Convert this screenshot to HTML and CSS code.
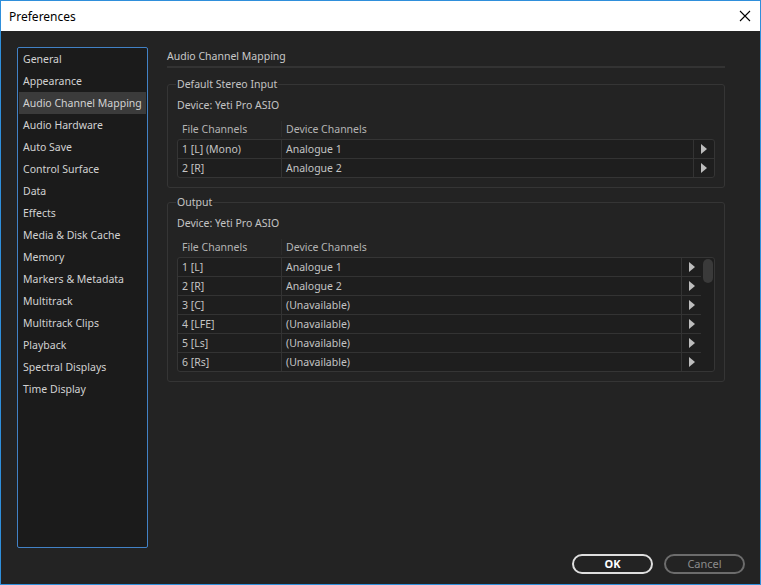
FILE: index.html
```html
<!DOCTYPE html>
<html>
<head>
<meta charset="utf-8">
<title>Preferences</title>
<link rel="stylesheet" href="styles.css">
</head>
<body>
<div class="window">
  <div class="titlebar">
    <span class="title">Preferences</span>
    <svg class="close" width="12" height="12" viewBox="0 0 12 12"><path d="M1 1L11 11M11 1L1 11" stroke="#000" stroke-width="1.1" fill="none"/></svg>
  </div>
  <div class="main">
    <div class="panes">
      <ul class="sidebar">
        <li>General</li>
        <li>Appearance</li>
        <li class="selected">Audio Channel Mapping</li>
        <li>Audio Hardware</li>
        <li>Auto Save</li>
        <li>Control Surface</li>
        <li>Data</li>
        <li>Effects</li>
        <li>Media &amp; Disk Cache</li>
        <li>Memory</li>
        <li>Markers &amp; Metadata</li>
        <li>Multitrack</li>
        <li>Multitrack Clips</li>
        <li>Playback</li>
        <li>Spectral Displays</li>
        <li>Time Display</li>
      </ul>
      <div class="content">
        <div class="heading">Audio Channel Mapping</div>
        <fieldset class="group first">
          <legend>Default Stereo Input</legend>
          <div class="device">Device: Yeti Pro ASIO</div>
          <div class="thead"><span class="c1">File Channels</span><span class="c2">Device Channels</span></div>
          <div class="table">
            <div class="rows">
              <div class="row"><span class="c1">1 [L] (Mono)</span><span class="c2">Analogue 1</span><span class="c3"><i class="arrow"></i></span></div>
              <div class="row"><span class="c1">2 [R]</span><span class="c2">Analogue 2</span><span class="c3"><i class="arrow"></i></span></div>
            </div>
          </div>
        </fieldset>
        <fieldset class="group second">
          <legend>Output</legend>
          <div class="device">Device: Yeti Pro ASIO</div>
          <div class="thead"><span class="c1">File Channels</span><span class="c2">Device Channels</span></div>
          <div class="table">
            <div class="rows">
              <div class="row"><span class="c1">1 [L]</span><span class="c2">Analogue 1</span><span class="c3"><i class="arrow"></i></span></div>
              <div class="row"><span class="c1">2 [R]</span><span class="c2">Analogue 2</span><span class="c3"><i class="arrow"></i></span></div>
              <div class="row"><span class="c1">3 [C]</span><span class="c2">(Unavailable)</span><span class="c3"><i class="arrow"></i></span></div>
              <div class="row"><span class="c1">4 [LFE]</span><span class="c2">(Unavailable)</span><span class="c3"><i class="arrow"></i></span></div>
              <div class="row"><span class="c1">5 [Ls]</span><span class="c2">(Unavailable)</span><span class="c3"><i class="arrow"></i></span></div>
              <div class="row"><span class="c1">6 [Rs]</span><span class="c2">(Unavailable)</span><span class="c3"><i class="arrow"></i></span></div>
            </div>
            <div class="scrollbar"><div class="thumb"></div></div>
          </div>
        </fieldset>
      </div>
    </div>
    <div class="footer">
      <button class="btn ok">OK</button>
      <button class="btn cancel">Cancel</button>
    </div>
  </div>
</div>
</body>
</html>
```
FILE: styles.css
```css
* { box-sizing: border-box; }
html, body { margin: 0; padding: 0; }
body {
  width: 761px;
  height: 585px;
  overflow: hidden;
  font-family: "Noto Sans", "Open Sans", sans-serif;
  font-size: 10.5px;
}
.window {
  width: 761px;
  height: 585px;
  border: 1px solid #2f8fdb;
  display: flex;
  flex-direction: column;
  background: #232323;
}
.titlebar {
  height: 30px;
  background: #ffffff;
  display: flex;
  align-items: center;
  justify-content: space-between;
  padding: 0 9px 0 8px;
}
.title {
  font-size: 12px;
  color: #000;
}
.close { display: block; }
.main {
  flex: 1;
  display: flex;
  flex-direction: column;
  padding: 16px 15px 10px 16px;
}
.panes {
  display: flex;
  gap: 19px;
  height: 501px;
}
.sidebar {
  list-style: none;
  margin: 0;
  padding: 0 1px;
  width: 131px;
  height: 501px;
  background: #1b1b1b;
  border: 1px solid #4282c6;
  border-radius: 2px;
}
.sidebar li {
  height: 22px;
  line-height: 22px;
  padding-left: 4px;
  color: #d2d2d2;
  white-space: nowrap;
}
.sidebar li.selected {
  background: #3b3b3b;
}
.content {
  width: 558px;
  display: flex;
  flex-direction: column;
}
.heading {
  height: 21px;
  line-height: 18px;
  color: #c8c8c8;
  border-bottom: 2px solid #333333;
}
.group {
  margin: 0;
  padding: 0 9px 9px 9px;
  border: 1px solid #353535;
  border-radius: 3px;
}
.group.first { margin-top: 8px; }
.group.second { margin-top: 6px; }
.group legend {
  padding: 0 1px;
  margin-left: -1px;
  line-height: 16px;
  color: #c4c4c4;
}
.device {
  margin-top: 5px;
  line-height: 16px;
  color: #c4c4c4;
}
.thead {
  margin-top: 6px;
  height: 20px;
  display: flex;
  align-items: center;
  color: #b4b4b4;
}
.thead .c1 {
  width: 105px;
  padding-left: 5px;
  border-right: 1px solid #2c2c2c;
  line-height: 16px;
}
.thead .c2 {
  padding-left: 4px;
}
.table {
  display: flex;
  background: #1e1e1e;
  border: 1px solid #353535;
  border-radius: 3px;
}
.rows {
  flex: 1;
  display: flex;
  flex-direction: column;
}
.row {
  display: grid;
  grid-template-columns: 104px 1fr 21px;
  height: 19px;
  border-bottom: 1px solid #333333;
  color: #c4c4c4;
}
.row:last-child { border-bottom: none; height: 18px; }
.row span {
  display: flex;
  align-items: center;
  padding-bottom: 1px;
}
.row .c1 {
  padding-left: 4px;
  border-right: 1px solid #333333;
}
.row .c2 {
  padding-left: 4px;
}
.row .c3 {
  justify-content: center;
  border-left: 1px solid #333333;
  padding-bottom: 0;
}
.second .row { grid-template-columns: 104px 1fr 20px; }
.arrow {
  display: block;
  width: 0;
  height: 0;
  border-left: 6px solid #bdbdbd;
  border-top: 5px solid transparent;
  border-bottom: 5px solid transparent;
}
.scrollbar {
  width: 13px;
  padding: 1px 1px 0 2px;
}
.thumb {
  width: 10px;
  height: 24px;
  border-radius: 5px;
  background: #3a3a3a;
}
.footer {
  margin-top: 6px;
  display: flex;
  justify-content: flex-end;
  gap: 11px;
}
.btn {
  width: 81px;
  height: 20px;
  border-radius: 10px;
  background: transparent;
  font-family: "Noto Sans", "Open Sans", sans-serif;
  font-size: 11px;
  padding: 0;
  line-height: 16px;
}
.btn.ok {
  border: 2px solid #dedede;
  color: #ffffff;
  font-weight: bold;
}
.btn.cancel {
  border: 2px solid #6c6c6c;
  color: #8c8c8c;
}
```
